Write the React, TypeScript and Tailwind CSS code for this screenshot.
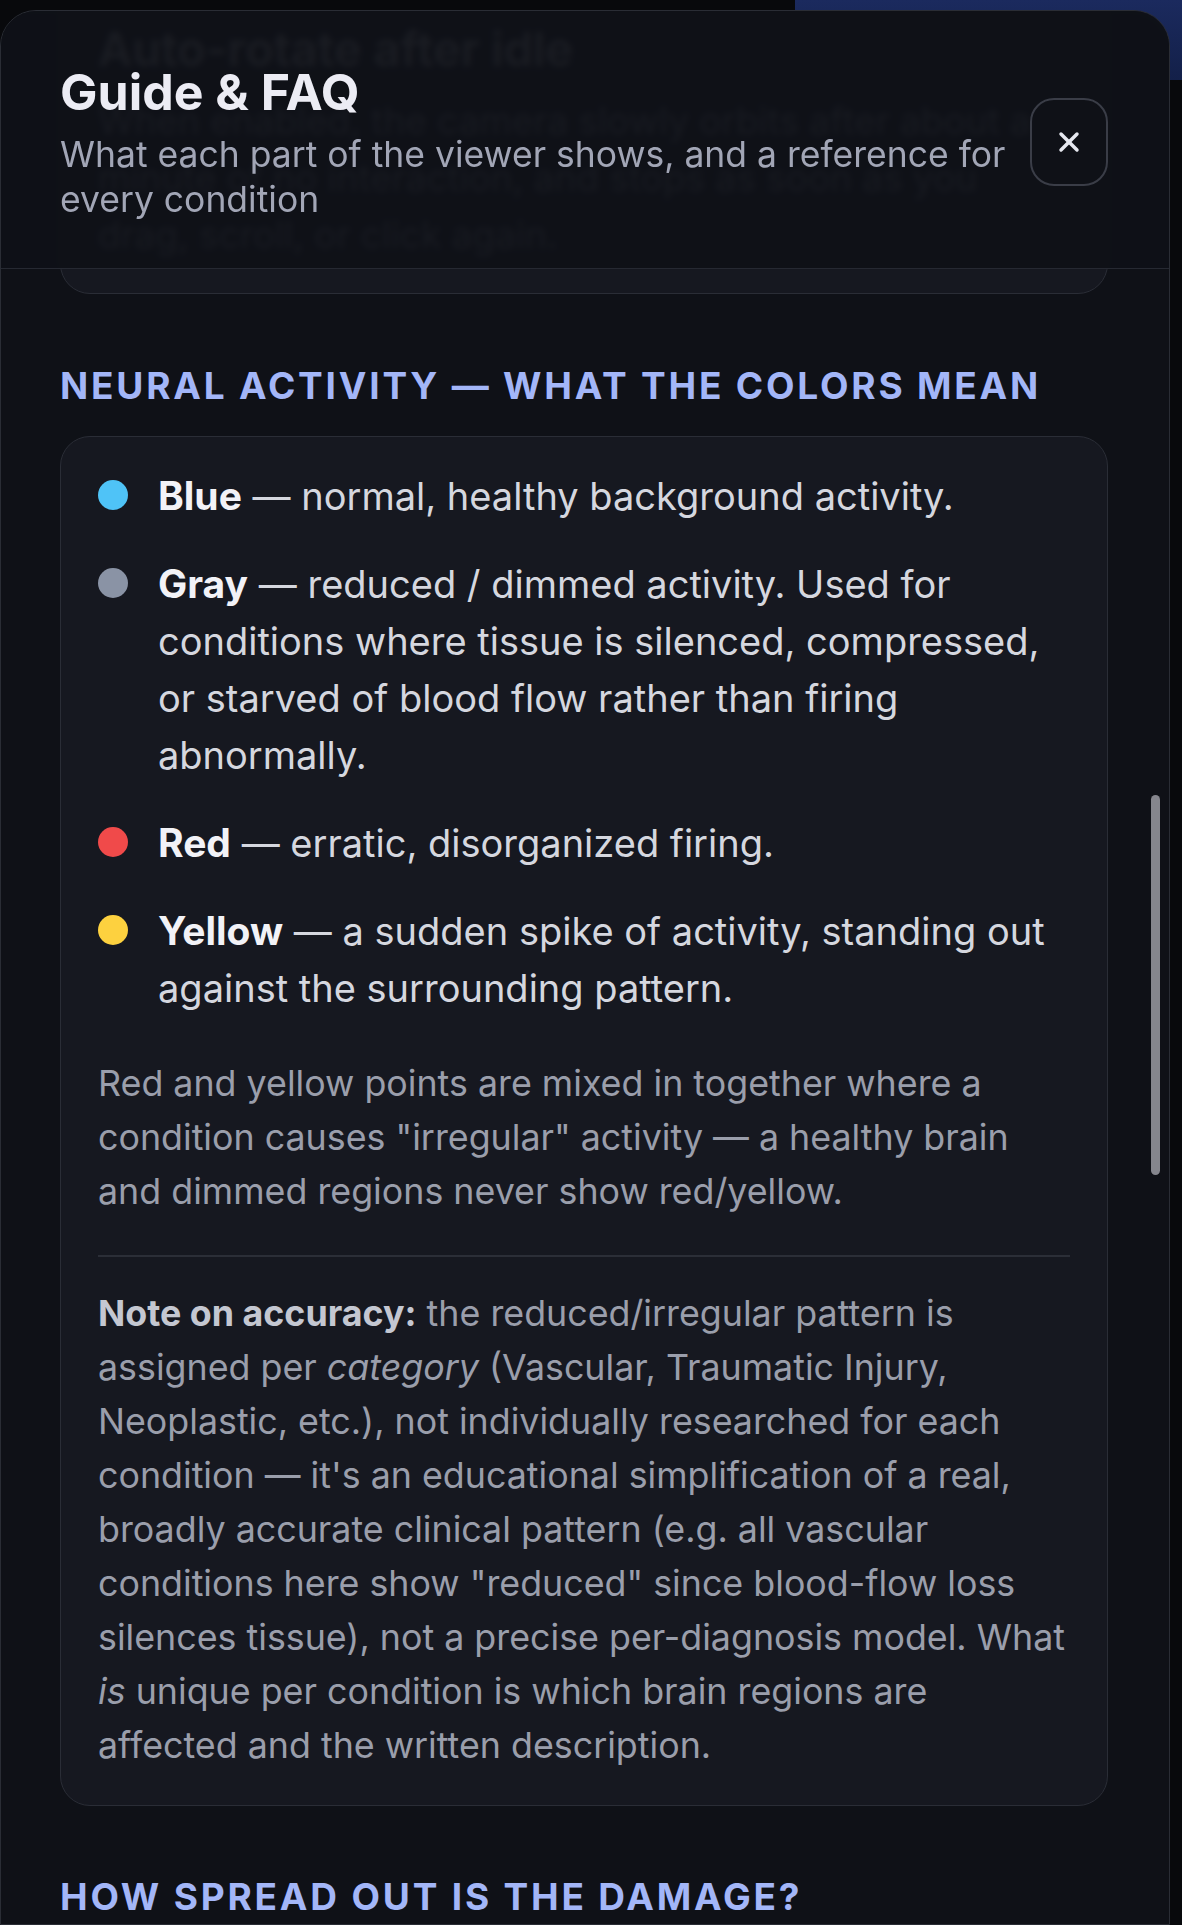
import { X } from "lucide-react";

interface Legend {
    label: string,
    dot: string,
    text: string
}

const legend: Legend[] = [
    { label: "Blue", dot: "bg-[#4fc3f7]", text: "normal, healthy background activity." },
    { label: "Gray", dot: "bg-[#8a93a5]", text: "reduced / dimmed activity. Used for conditions where tissue is silenced, compressed, or starved of blood flow rather than firing abnormally." },
    { label: "Red", dot: "bg-[#f04a4a]", text: "erratic, disorganized firing." },
    { label: "Yellow", dot: "bg-[#fdd13f]", text: "a sudden spike of activity, standing out against the surrounding pattern." },
]

const SectionTitle = ({ children }: { children: string }) => (
    <h2 className="text-[37px] leading-[44px] font-bold uppercase tracking-[0.076em] text-[#a3b6f8]">{children}</h2>
)

const App = () => {
    return (
        <div className="relative h-[1925px] overflow-hidden bg-[#08090c] font-['Inter',sans-serif]">
            {/* page behind the dialog */}
            <div className="absolute top-0 left-[795px] right-0 h-[80px] bg-gradient-to-b from-[#1b2a5e] to-[#132049]"></div>

            <div className="relative mt-[10px] w-[1170px] h-[1915px] rounded-t-[36px] border border-[#2a2d35] bg-[#0f1117] overflow-hidden flex flex-col">
                {/* header */}
                <div className="relative z-10 flex items-center justify-between gap-[16px] pl-[59px] pr-[61px] pt-[51px] pb-[46px] border-b border-[#262932] bg-[#0f1117]/[0.95] backdrop-blur-[3px]">
                    <div>
                        <h1 className="text-[50px] leading-[60px] font-bold text-[#ececf4]">Guide &amp; FAQ</h1>
                        <p className="mt-[10px] text-[35.5px] leading-[45px] text-[#a2a6b6]">What each part of the viewer shows, and a reference for every condition</p>
                    </div>
                    <button className="shrink-0 w-[78px] h-[88px] rounded-[24px] border-2 border-[#3a3d47] flex items-center justify-center text-[#e6e8f0]">
                        <X size={32} strokeWidth={2.6} />
                    </button>
                </div>

                {/* scroll thumb */}
                <div className="absolute z-20 top-[784px] right-[9px] w-[9px] h-[380px] rounded-full bg-[#85868d]"></div>

                <div className="pl-[59px] pr-[61px]">
                    {/* previous card, scrolled under the header */}
                    <div className="-mt-[280px] rounded-[30px] border border-[#2a2d36] bg-[#161820] pt-[29px] pb-[30px] px-[37px]">
                        <h3 className="text-[47px] leading-[60px] font-semibold text-[#e5e7eb]">Auto-rotate after idle</h3>
                        <p className="mt-[13px] text-[37px] leading-[57px] text-[#b8bcc8]">When enabled, the camera slowly orbits after about a minute of no interaction, and stops as soon as you drag, scroll, or click again.</p>
                    </div>

                    <div className="mt-[70px]">
                        <SectionTitle>Neural activity — what the colors mean</SectionTitle>
                    </div>

                    <div className="mt-[28px] rounded-[30px] border border-[#2a2d36] bg-[#161820] pt-[30px] pb-[33px] px-[37px]">
                        <ul className="flex flex-col gap-[30px]">
                            {legend.map((item) => (
                                <li key={item.label} className="flex items-start gap-[30px]">
                                    <span className={`shrink-0 mt-[13px] w-[30px] h-[30px] rounded-full ${item.dot}`}></span>
                                    <p className="text-[38px] leading-[57px] text-[#d5d7df]">
                                        <b className="text-[39px] font-bold text-[#f2f2f7]">{item.label}</b> — {item.text}
                                    </p>
                                </li>
                            ))}
                        </ul>

                        <p className="mt-[39px] text-[35.8px] leading-[54px] text-[#9a9eab]">
                            Red and yellow points are mixed in together where a condition causes "irregular" activity — a healthy brain and dimmed regions never show red/yellow.
                        </p>

                        <div className="mt-[37px] h-[2px] bg-[#2b2e37]"></div>

                        <p className="mt-[29px] text-[35.8px] leading-[54px] text-[#9a9eab]">
                            <b className="font-bold text-[#c4c7d1]">Note on accuracy:</b> the reduced/irregular pattern is assigned per <i>category</i> (Vascular, Traumatic Injury, Neoplastic, etc.), not individually researched for each condition — it's an educational simplification of a real, broadly accurate clinical pattern (e.g. all vascular conditions here show "reduced" since blood-flow loss silences tissue), not a precise per-diagnosis model. What <i>is</i> unique per condition is which brain regions are affected and the written description.
                        </p>
                    </div>

                    <div className="mt-[69px]">
                        <SectionTitle>How spread out is the damage?</SectionTitle>
                    </div>
                </div>
            </div>
        </div>
    );
}
export default App
